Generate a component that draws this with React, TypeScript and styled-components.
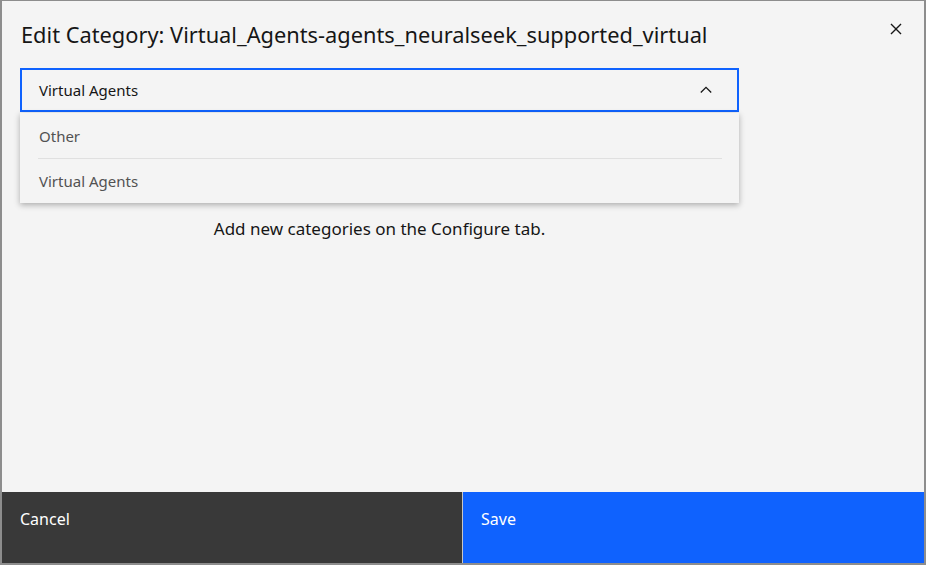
import React from "react";
import styled, { createGlobalStyle } from "styled-components";

const GlobalStyle = createGlobalStyle`
  html, body {
    margin: 0;
    padding: 0;
    background: #8d8d8d;
    font-family: "Noto Sans", "Open Sans", sans-serif;
    color: #161616;
  }
  * { box-sizing: border-box; }
`;

const Overlay = styled.div`
  width: 926px;
  height: 565px;
  padding: 1px 2px 2px 2px;
`;

const Modal = styled.div`
  width: 922px;
  height: 562px;
  background: #f4f4f4;
  display: flex;
  flex-direction: column;
  position: relative;
`;

const Header = styled.header`
  padding: 19px 60px 0 19px;
`;

const Title = styled.h2`
  margin: 0;
  font-size: 21.8px;
  font-weight: 400;
  line-height: 30px;
  color: #161616;
  white-space: nowrap;
`;

const CloseButton = styled.button`
  position: absolute;
  top: 16px;
  right: 16px;
  width: 24px;
  height: 24px;
  padding: 0;
  border: 0;
  background: transparent;
  display: grid;
  place-items: center;
  color: #161616;
`;

const Content = styled.div`
  flex: 1;
  padding: 18px 185px 0 18px;
`;

const DropdownWrap = styled.div`
  position: relative;
`;

const Field = styled.div`
  height: 44px;
  border: 2px solid #0f62fe;
  background: #f4f4f4;
  display: flex;
  align-items: center;
  justify-content: space-between;
  padding: 0 25px 0 17px;
  font-size: 15px;
  color: #161616;
`;

const Menu = styled.ul`
  position: absolute;
  top: 45px;
  left: 0;
  right: 0;
  margin: 0;
  padding: 0;
  list-style: none;
  background: #f4f4f4;
  box-shadow: 0 2px 6px rgba(0, 0, 0, 0.3);
  z-index: 2;
`;

const MenuItem = styled.li<{ $first?: boolean }>`
  height: 45px;
  margin: 0 17px 0 18px;
  padding-left: 1px;
  display: flex;
  align-items: center;
  font-size: 15px;
  color: #525252;
  border-top: ${({ $first }) => ($first ? "1px solid transparent" : "1px solid #e0e0e0")};
`;

const Hint = styled.p`
  margin: 106px 0 0;
  text-align: center;
  font-size: 17px;
  line-height: 22px;
  color: #161616;
`;

const Footer = styled.footer`
  height: 71px;
  display: grid;
  grid-template-columns: 460px 1fr;
`;

const FooterButton = styled.button<{ $primary?: boolean }>`
  border: 0;
  border-left: ${({ $primary }) => ($primary ? "1px solid #c6c6c6" : "0")};
  background: ${({ $primary }) => ($primary ? "#0f62fe" : "#393939")};
  color: #ffffff;
  font-family: "Noto Sans", sans-serif;
  font-size: 16px;
  text-align: left;
  padding: 0 0 18px 18px;
  display: flex;
  align-items: center;
`;

export default function App() {
  return (
    <>
      <GlobalStyle />
      <Overlay>
        <Modal>
          <Header>
            <Title>Edit Category: Virtual_Agents-agents_neuralseek_supported_virtual</Title>
          </Header>
          <CloseButton aria-label="Close">
            <svg width="22" height="22" viewBox="0 0 32 32" fill="currentColor">
              <path d="M24 9.4L22.6 8 16 14.6 9.4 8 8 9.4 14.6 16 8 22.6 9.4 24 16 17.4 22.6 24 24 22.6 17.4 16 24 9.4z" />
            </svg>
          </CloseButton>
          <Content>
            <DropdownWrap>
              <Field>
                <span>Virtual Agents</span>
                <svg width="12" height="8" viewBox="0 0 12 8" fill="none">
                  <path d="M0.8 6.5L6 1.3l5.2 5.2" stroke="#161616" strokeWidth="1.3" />
                </svg>
              </Field>
              <Menu>
                <MenuItem $first>Other</MenuItem>
                <MenuItem>Virtual Agents</MenuItem>
              </Menu>
            </DropdownWrap>
            <Hint>Add new categories on the Configure tab.</Hint>
          </Content>
          <Footer>
            <FooterButton>Cancel</FooterButton>
            <FooterButton $primary>Save</FooterButton>
          </Footer>
        </Modal>
      </Overlay>
    </>
  );
}
